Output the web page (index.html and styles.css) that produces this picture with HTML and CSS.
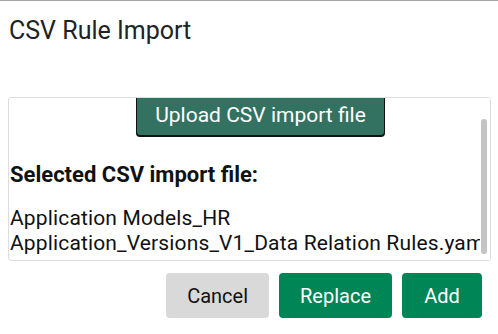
FILE: index.html
```html
<!DOCTYPE html>
<html lang="en">

<head>
  <meta charset="UTF-8" />
  <meta name="viewport" content="width=device-width, initial-scale=1.0" />
  <title>CSV Rule Import</title>
  <link rel="stylesheet" href="styles.css">
</head>

<body>
  <div class="dialog">
    <h2 class="dialog-title">CSV Rule Import</h2>
    <div class="import-wrap">
      <div class="import-box" id="import-box">
        <button class="upload-btn" type="button">Upload CSV import file</button>
        <p class="selected-label">Selected CSV import file:</p>
        <div class="file-name">
          <div>Application Models_HR</div>
          <div>Application_Versions_V1_Data Relation Rules.yaml</div>
        </div>
      </div>
      <!-- scrollbar drawn by hand, the browser hides its own -->
      <div class="scroll-track"><span class="scroll-thumb"></span></div>
    </div>
    <div class="dialog-actions">
      <button class="btn btn-cancel" type="button">Cancel</button>
      <button class="btn btn-green" type="button">Replace</button>
      <button class="btn btn-green" type="button">Add</button>
    </div>
  </div>
  <script>
    // box is shown scrolled a little, like in the dialog
    document.getElementById("import-box").scrollTop = 25;
  </script>
</body>

</html>
```

FILE: styles.css
```css
body {
  margin: 0;
  background-color: #fff;
  font-family: Roboto, "Liberation Sans", sans-serif;
  color: #1a1a1a;
}

.dialog {
  border-top: 1px solid #a6a6a6;
  height: 333px;
}

.dialog-title {
  margin: 0;
  padding: 15px 0 0 9px;
  height: 96px;
  box-sizing: border-box;
  font-size: 25px;
  font-weight: normal;
  line-height: 30px;
  color: #222;
}

.import-wrap {
  position: relative;
  margin: 0 7px 0 8px;
}

.import-box {
  height: 164px;
  box-sizing: border-box;
  border: 1px solid #ddd;
  border-radius: 3px;
  padding: 21px 0 11px 1px;
  overflow-y: auto;
  overflow-x: hidden;
  scrollbar-width: none;
}

.import-box::-webkit-scrollbar {
  display: none;
}

.scroll-track {
  position: absolute;
  top: 1px;
  right: 1px;
  bottom: 1px;
  width: 10px;
  background-color: #fff;
}

.scroll-thumb {
  position: absolute;
  top: 21px;
  left: 1px;
  width: 6px;
  height: 135px;
  border-radius: 3px;
  background-color: #c4c4c4;
}

.upload-btn {
  display: block;
  margin-left: 126px;
  width: 249px;
  height: 42px;
  padding: 0;
  border: 1px solid #111;
  border-radius: 4px;
  box-shadow: 0 1px 0 #111;
  background-color: #337161;
  color: #fff;
  font-family: inherit;
  font-size: 21px;
}

.selected-label {
  margin: 26px 0 18px;
  font-size: 22px;
  font-weight: bold;
  line-height: 26px;
  color: #111;
}

.file-name {
  font-size: 21px;
  line-height: 25px;
  letter-spacing: 0.15px;
  white-space: nowrap;
  color: #111;
}

.dialog-actions {
  display: flex;
  justify-content: flex-end;
  gap: 10px;
  margin-top: 12px;
  padding-right: 16px;
}

.btn {
  height: 45px;
  min-width: 80px;
  border: none;
  border-radius: 4px;
  padding: 0 21px;
  font-family: inherit;
  font-size: 20px;
}

.btn-cancel {
  background-color: #d9d9d9;
  color: #111;
}

.btn-green {
  background-color: #008556;
  color: #fff;
}
```
